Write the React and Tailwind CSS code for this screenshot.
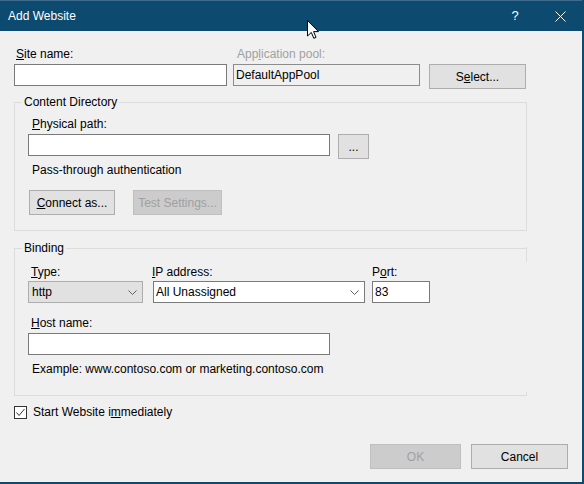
import React from "react";

const Btn = ({ children, className = "", disabled = false }) => (
  <button
    className={
      "h-[25px] border text-[12px] leading-[16px] " +
      (disabled
        ? "bg-[#cccccc] border-[#bfbfbf] text-[#a0a0a0] "
        : "bg-[#e1e1e1] border-[#adadad] text-black ") +
      className
    }
  >
    {children}
  </button>
);

const TextBox = ({ className = "", children }) => (
  <div
    className={
      "h-[22px] border border-[#7a7a7a] bg-white flex items-center pl-[2px] " +
      className
    }
  >
    {children}
  </div>
);

const Chevron = () => (
  <svg width="9" height="5" viewBox="0 0 9 5" className="shrink-0">
    <polyline
      points="0.5,0.5 4.5,4.5 8.5,0.5"
      fill="none"
      stroke="#606060"
      strokeWidth="1"
    />
  </svg>
);

export default function App() {
  return (
    <div className="relative w-[584px] h-[484px] bg-[#f0f0f0] flex flex-col border-r-2 border-b-2 border-[#0d4a6f] font-['Liberation_Sans',Arial,sans-serif] text-[12px] leading-[16px] text-black">
      {/* title bar */}
      <div className="h-[31px] shrink-0 bg-[#0d4a6f] border-t border-[#3f6b8c] flex items-center text-white">
        <span className="pl-[8px]">Add Website</span>
        <span className="ml-auto w-[46px] text-center text-[13px]">?</span>
        <span className="w-[44px] flex justify-center">
          <svg width="11" height="11" viewBox="0 0 11 11">
            <path d="M0.5 0.5 L10.5 10.5 M10.5 0.5 L0.5 10.5" stroke="#fff" strokeWidth="1" />
          </svg>
        </span>
      </div>

      <div className="flex-1 flex flex-col px-[14px]">
        {/* site name / app pool */}
        <div className="flex items-start pt-[15px]">
          <div className="w-[213px]">
            <div className="pl-[2px]">
              <u>S</u>ite name:
            </div>
            <TextBox className="mt-[2px]" />
          </div>
          <div className="w-[187px] ml-[6px]">
            <div className="pl-[4px] text-[#a0a0a0]">
              App<u>l</u>ication pool:
            </div>
            <div className="mt-[2px] h-[22px] border border-[#8c8c8c] bg-[#f0f0f0] flex items-center pl-[2px]">
              DefaultAppPool
            </div>
          </div>
          <Btn className="ml-[9px] mt-[18px] w-[97px]">
            S<u>e</u>lect...
          </Btn>
        </div>

        {/* content directory */}
        <fieldset className="mt-[5px] w-[513px] border border-[#dcdcdc] px-[13px] pb-[15px]">
          <legend className="-ml-[6px] px-[2px]">Content Directory</legend>
          <div className="mt-[6px] pl-[4px]">
            <u>P</u>hysical path:
          </div>
          <div className="flex items-start mt-[2px]">
            <TextBox className="w-[302px]" />
            <Btn className="ml-[8px] w-[31px]">...</Btn>
          </div>
          <div className="mt-[3px] pl-[4px]">Pass-through authentication</div>
          <div className="flex mt-[12px] pl-[1px]">
            <Btn className="w-[86px]">
              <u>C</u>onnect as...
            </Btn>
            <Btn disabled className="ml-[18px] w-[89px]">
              Test Settin<u>g</u>s...
            </Btn>
          </div>
        </fieldset>

        {/* binding */}
        <fieldset className="relative mt-[9px] w-[513px] border border-[#dcdcdc] border-r-transparent px-[13px] pb-[18px]">
          <legend className="-ml-[6px] px-[2px]">Binding</legend>
          <span className="absolute right-[-1px] top-[-9px] h-[15px] w-px bg-[#dcdcdc]" />
          <span className="absolute right-[-1px] bottom-[-1px] h-[4px] w-px bg-[#dcdcdc]" />
          <div className="flex items-start mt-[8px]">
            <div className="w-[115px]">
              <div className="pl-[3px]">
                <u>T</u>ype:
              </div>
              <div className="mt-[1px] h-[22px] border border-[#adadad] bg-[#e1e1e1] flex items-center pl-[3px] pr-[5px]">
                <span className="flex-1">http</span>
                <Chevron />
              </div>
            </div>
            <div className="w-[212px] ml-[10px]">
              <div className="-ml-[1px]">
                <u>I</u>P address:
              </div>
              <TextBox className="mt-[1px] pr-[5px]">
                <span className="flex-1">All Unassigned</span>
                <Chevron />
              </TextBox>
            </div>
            <div className="w-[58px] ml-[7px]">
              <div>
                P<u>o</u>rt:
              </div>
              <TextBox className="mt-[1px]">83</TextBox>
            </div>
          </div>
          <div className="mt-[12px] pl-[3px]">
            <u>H</u>ost name:
          </div>
          <TextBox className="mt-[2px] w-[302px]" />
          <div className="mt-[6px] pl-[4px]">
            Example: www.contoso.com or marketing.contoso.com
          </div>
        </fieldset>

        {/* start website */}
        <div className="flex items-center mt-[8px]">
          <div className="w-[13px] h-[13px] border border-[#333333] bg-white flex items-center justify-center">
            <svg width="11" height="11" viewBox="0 0 11 11">
              <polyline points="1.5,5.5 4,8.5 9.5,2" fill="none" stroke="#333" strokeWidth="1" />
            </svg>
          </div>
          <span className="ml-[6px]">
            Start Website i<u>m</u>mediately
          </span>
        </div>

        {/* footer buttons */}
        <div className="mt-auto mb-[13px] flex justify-end">
          <Btn disabled className="w-[91px]">
            OK
          </Btn>
          <Btn className="ml-[10px] w-[97px]">Cancel</Btn>
        </div>
      </div>

      {/* mouse pointer */}
      <svg
        className="absolute left-[307px] top-[20px]"
        width="13"
        height="20"
        viewBox="0 0 13 20"
      >
        <path
          d="M0.5 0.5 L0.5 16 L4.3 12.4 L6.8 18.3 L9 17.4 L6.6 11.6 L11.5 11.6 Z"
          fill="#fff"
          stroke="#000"
          strokeWidth="1"
        />
      </svg>
    </div>
  );
}
